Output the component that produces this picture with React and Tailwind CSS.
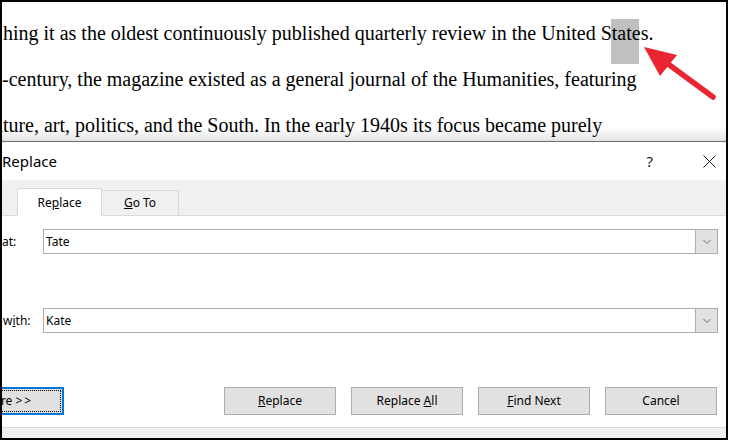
import React from 'react';

const ui = { fontFamily: '"Noto Sans", "Open Sans", sans-serif' };
const serif = { fontFamily: '"Liberation Serif", "Times New Roman", serif' };

function Chevron() {
  return (
    <svg width="10" height="6" viewBox="0 0 10 6" fill="none">
      <path d="M1.5 1 L5 4.5 L8.5 1" stroke="#6a6a6a" strokeWidth="1" />
    </svg>
  );
}

function ComboInput({ value }) {
  return (
    <div className="flex h-[25px] w-[675px] border border-[#adadad] bg-white">
      <div className="flex flex-1 items-center pl-[2px] text-[12px] text-black">{value}</div>
      <div className="flex w-[22px] items-center justify-center border-l border-[#adadad] bg-[#e1e1e1]">
        <Chevron />
      </div>
    </div>
  );
}

function DlgButton({ children, focused, className = '' }) {
  if (focused) {
    return (
      <div className={`flex h-[28px] w-[112px] items-center justify-center border-2 border-[#0078d7] bg-[#e1e1e1] p-[1px] ${className}`}>
        <div className="flex h-full w-full items-center justify-center border border-dotted border-black text-[12px] text-black">
          {children}
        </div>
      </div>
    );
  }
  return (
    <div className={`flex h-[28px] w-[112px] items-center justify-center border border-[#adadad] bg-[#e1e1e1] text-[12px] text-black ${className}`}>
      {children}
    </div>
  );
}

export default function App() {
  return (
    <div className="h-[441px] w-[730px] bg-white">
      <div className="relative flex h-[440px] w-[728px] flex-col overflow-hidden border-2 border-black bg-white">
        {/* document text, fading into the dialog's shadow */}
        <div
          className="relative isolate h-[139px] overflow-hidden bg-[linear-gradient(to_bottom,#ffffff_125px,#e4e4e4)] text-[20px] text-black"
          style={serif}
        >
          <div className="absolute left-[609px] top-[17px] -z-10 h-[45px] w-[28px] bg-[#c0c0c0]"></div>
          <div className="whitespace-nowrap pl-[1px] pt-[8px] leading-[46px]">
            <div>hing it as the oldest continuously published quarterly review in the United States.</div>
            <div className="ml-[-1px]">-century, the magazine existed as a general journal of the Humanities, featuring</div>
            <div className="ml-[-9px]">ature, art, politics, and the South. In the early 1940s its focus became purely</div>
          </div>
          <svg className="absolute left-[640px] top-[42px]" width="80" height="62" viewBox="0 0 80 62">
            <path d="M2 3 L35 11 L18 32 Z" fill="#ea2430" />
            <path d="M22 17 L71 53" stroke="#ea2430" strokeWidth="5.5" strokeLinecap="round" />
          </svg>
        </div>

        {/* dialog */}
        <div className="flex flex-1 flex-col border-t border-[#6e6e6e]" style={ui}>
          <div className="flex h-[38px] items-center bg-white">
            <div className="flex-1 text-[15px] text-black">Replace</div>
            <div className="mr-[50px] text-[15px] text-[#1a1a1a]">?</div>
            <svg className="mr-[10px]" width="13" height="13" viewBox="0 0 13 13">
              <path d="M0.5 0.5 L12.5 12.5 M12.5 0.5 L0.5 12.5" stroke="#1a1a1a" strokeWidth="1" />
            </svg>
          </div>
          <div className="flex h-[36px] items-end border-b border-[#d9d9d9] bg-[#f0f0f0]">
            <div className="h-[26px] w-[16px] border-r border-[#d9d9d9]"></div>
            <div className="mb-[-1px] flex h-[28px] w-[84px] items-center justify-center border-r border-t border-[#d9d9d9] bg-white text-[12px] text-black">
              Re<span className="underline">p</span>lace
            </div>
            <div className="flex h-[25px] w-[77px] items-center justify-center border-r border-t border-[#d9d9d9] text-[12px] text-black">
              <span className="underline">G</span>o To
            </div>
          </div>
          <div className="flex flex-1 flex-col bg-white">
            <div className="mt-[13px] flex items-center">
              <div className="w-[41px] text-[12px] text-black">at:</div>
              <ComboInput value="Tate" />
            </div>
            <div className="mt-[54px] flex items-center">
              <div className="w-[41px] pl-[1px] text-[12px] text-black">
                w<span className="underline">i</span>th:
              </div>
              <ComboInput value="Kate" />
            </div>
            <div className="mt-[54px] flex items-center">
              <DlgButton focused className="ml-[-50px]">
                <span>More <span className="tracking-[2px]">&gt;&gt;</span></span>
              </DlgButton>
              <DlgButton className="ml-[160px]"><span><span className="underline">R</span>eplace</span></DlgButton>
              <DlgButton className="ml-[15px]"><span>Replace <span className="underline">A</span>ll</span></DlgButton>
              <DlgButton className="ml-[15px]"><span><span className="underline">F</span>ind Next</span></DlgButton>
              <DlgButton className="ml-[15px]">Cancel</DlgButton>
            </div>
          </div>
          <div className="h-[11px] border-t border-[#d9d9d9] bg-[#f0f0f0]"></div>
        </div>
      </div>
    </div>
  );
}
